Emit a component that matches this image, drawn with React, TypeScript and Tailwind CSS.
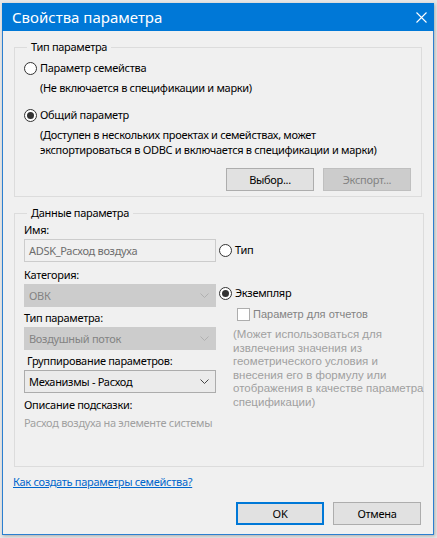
import clsx from 'clsx'

const Radio = ({ checked }: { checked?: boolean }) => (
  <span className="flex h-[13px] w-[13px] shrink-0 items-center justify-center rounded-full border border-[#333333] bg-white">
    {checked && <span className="h-[7px] w-[7px] rounded-full bg-[#333333]" />}
  </span>
)

const Chevron = () => (
  <svg width="9" height="5" viewBox="0 0 9 5" className="shrink-0">
    <path d="M0.5 0.5 L4.5 4.5 L8.5 0.5" fill="none" stroke="currentColor" strokeWidth="1" />
  </svg>
)

const Select = ({ value, disabled }: { value: string; disabled?: boolean }) => (
  <div
    className={clsx(
      'flex h-[23px] w-[192px] items-center justify-between border pl-[4px] pr-[6px]',
      disabled ? 'border-[#cccccc] bg-[#cccccc] text-[#838383]' : 'border-[#acacac] bg-[#ebebeb] text-black'
    )}
  >
    <span>{value}</span>
    <span className={disabled ? 'text-[#b0b0b0]' : 'text-[#444444]'}>
      <Chevron />
    </span>
  </div>
)

const Button = ({ label, disabled, primary }: { label: string; disabled?: boolean; primary?: boolean }) => (
  <button
    className={clsx(
      'flex h-[23px] w-[88px] items-center justify-center',
      disabled && 'border border-[#bfbfbf] bg-[#cccccc] text-[#838383]',
      primary && 'border-2 border-[#0078d7] bg-[#e1e1e1] text-black',
      !disabled && !primary && 'border border-[#adadad] bg-[#e1e1e1] text-black'
    )}
  >
    {label}
  </button>
)

const App = () => {
  return (
    <div className="h-[538px] w-[437px] bg-[#e6e6e6] pl-[2px] pt-[3px] font-['Noto_Sans',sans-serif] text-[11px] leading-[16px] tracking-[-0.3px] text-black">
      <div className="flex h-[532px] w-[432px] flex-col border border-t-0 border-[#2b7fd0] bg-[#f0f0f0] shadow-[1px_1px_3px_rgba(0,0,0,0.25)]">
        <div className="-mx-px flex h-[28px] shrink-0 items-center justify-between bg-[#0078d7] pl-[10px] pr-[7px] text-white">
          <span className="text-[15px] tracking-normal">Свойства параметра</span>
          <svg width="11" height="11" viewBox="0 0 11 11">
            <path d="M0.5 0.5 L10.5 10.5 M10.5 0.5 L0.5 10.5" stroke="white" strokeWidth="1.1" />
          </svg>
        </div>

        <div className="flex flex-col px-[11px]">
          <fieldset className="mt-[8px] border border-[#dcdcdc] pb-[5px] pl-[9px] pr-[10px]">
            <legend className="ml-[3px] px-[4px]">Тип параметра</legend>
            <div className="mt-[5px] flex items-center gap-[3px]">
              <Radio />
              <span>Параметр семейства</span>
            </div>
            <div className="mt-[4px] pl-[16px]">(Не включается в спецификации и марки)</div>
            <div className="mt-[11px] flex items-center gap-[3px]">
              <Radio checked />
              <span>Общий параметр</span>
            </div>
            <div className="mt-[4px] pl-[16px] leading-[15px]">
              (Доступен в нескольких проектах и семействах, может
              <br />
              экспортироваться в ODBC и включается в спецификации и марки)
            </div>
            <div className="mt-[11px] flex justify-end gap-[9px]">
              <Button label="Выбор..." />
              <Button label="Экспорт..." disabled />
            </div>
          </fieldset>

          <fieldset className="mt-[8px] flex border border-[#dcdcdc] pb-[35px] pl-[9px]">
            <legend className="ml-[3px] px-[4px]">Данные параметра</legend>
            <div className="flex">
              <div className="flex w-[192px] flex-col">
                <span className="mt-[1px]">Имя:</span>
                <div className="mt-[1px] flex h-[23px] items-center border border-[#cccccc] bg-[#f0f0f0] pl-[4px] text-[#6d6d6d]">
                  ADSK_Расход воздуха
                </div>
                <span className="mt-[5px]">Категория:</span>
                <div className="mt-[1px]">
                  <Select value="ОВК" disabled />
                </div>
                <span className="mt-[3px]">Тип параметра:</span>
                <div className="mt-[1px]">
                  <Select value="Воздушный поток" disabled />
                </div>
                <span className="mt-[3px] pl-[3px]">Группирование параметров:</span>
                <div className="mt-[1px]">
                  <Select value="Механизмы - Расход" />
                </div>
                <span className="mt-[4px] whitespace-nowrap">Описание подсказки:</span>
                <span className="mt-[2px] whitespace-nowrap text-[#a0a0a0]">Расход воздуха на элементе системы</span>
              </div>

              <div className="ml-[3px] flex flex-col">
                <div className="mt-[21px] flex items-center gap-[3px]">
                  <Radio />
                  <span>Тип</span>
                </div>
                <div className="mt-[27px] flex items-center gap-[3px]">
                  <Radio checked />
                  <span>Экземпляр</span>
                </div>
                <div className="mt-[5px] flex items-center gap-[3px] pl-[18px] font-['Liberation_Sans',sans-serif] tracking-normal text-[#838383]">
                  <span className="h-[13px] w-[13px] border border-[#adadad] bg-white" />
                  <span>Параметр для отчетов</span>
                </div>
                <div className="mt-[6px] whitespace-nowrap pl-[14px] font-['Liberation_Sans',sans-serif] text-[11.5px] leading-[13.5px] tracking-normal text-[#a0a0a0]">
                  (Может использоваться для
                  <br />
                  извлечения значения из
                  <br />
                  геометрического условия и
                  <br />
                  внесения его в формулу или
                  <br />
                  отображения в качестве параметра
                  <br />
                  спецификации)
                </div>
              </div>
            </div>
          </fieldset>

          <a href="#" className="mt-[7px] -ml-px self-start text-[#0066cc] underline">
            Как создать параметры семейства?
          </a>

          <div className="mt-[12px] flex justify-end gap-[9px] pr-[1px]">
            <Button label="OK" primary />
            <Button label="Отмена" />
          </div>
        </div>
      </div>
    </div>
  )
}

export default App
